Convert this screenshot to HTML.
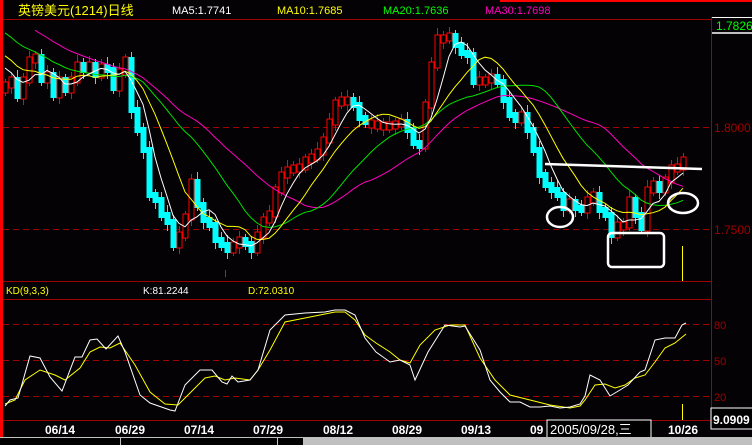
<!DOCTYPE html>
<html><head><meta charset="utf-8"><style>
html,body{margin:0;padding:0;background:#000;width:752px;height:445px;overflow:hidden}
svg{display:block}
text{font-family:"Liberation Sans","Noto Sans CJK SC",sans-serif}
</style></head><body>
<svg id="s" width="752" height="445" viewBox="0 0 752 445" xmlns="http://www.w3.org/2000/svg">
<rect width="752" height="445" fill="#040204"/>
<rect x="0" y="0" width="3" height="437" fill="#ff0000"/>
<rect x="500" y="0" width="252" height="2" fill="#ff0000"/>
<line x1="3" y1="19.5" x2="711" y2="19.5" stroke="#a00000"/>
<line x1="711.5" y1="17" x2="711.5" y2="420" stroke="#a00000"/>
<line x1="3" y1="281.5" x2="711" y2="281.5" stroke="#a00000"/>
<line x1="3" y1="299.5" x2="711" y2="299.5" stroke="#a00000"/>
<line x1="3" y1="420.5" x2="711" y2="420.5" stroke="#a00000"/>
<g stroke="#a00000" stroke-dasharray="6,4">
<line x1="3" y1="127.5" x2="711" y2="127.5"/>
<line x1="3" y1="229.5" x2="711" y2="229.5"/>
<line x1="3" y1="324.5" x2="711" y2="324.5"/>
<line x1="3" y1="360.5" x2="711" y2="360.5"/>
<line x1="3" y1="396.5" x2="711" y2="396.5"/>
</g>
<text x="18" y="15" fill="#ffff00" font-size="13">英镑美元(1214)日线</text>
<text x="172" y="14" fill="#ffffff" font-size="11">MA5:1.7741</text>
<text x="277" y="14" fill="#ffff00" font-size="11">MA10:1.7685</text>
<text x="383" y="14" fill="#00ff00" font-size="11">MA20:1.7636</text>
<text x="485" y="14" fill="#ff00c0" font-size="11">MA30:1.7698</text>
<line x1="712" y1="17.5" x2="752" y2="17.5" stroke="#fff"/>
<line x1="712" y1="33" x2="752" y2="33" stroke="#fff" stroke-width="1.5"/>
<text x="716" y="30" fill="#00ff00" font-size="12">1.7826</text>
<text x="714" y="132" fill="#a00000" font-size="12">1.8000</text>
<text x="714" y="234" fill="#a00000" font-size="12">1.7500</text>
<text x="6" y="294" fill="#ffff00" font-size="10">KD(9,3,3)</text>
<text x="143" y="294" fill="#ffffff" font-size="10">K:81.2244</text>
<text x="248" y="294" fill="#ffff00" font-size="10">D:72.0310</text>
<text x="714" y="329" fill="#a00000" font-size="11">80</text>
<text x="714" y="365" fill="#a00000" font-size="11">50</text>
<text x="714" y="401" fill="#a00000" font-size="11">20</text>
<rect x="711" y="408" width="42" height="21" fill="#000" stroke="#fff"/>
<text x="713" y="424" fill="#fff" font-size="12" font-weight="bold">9.0909</text>
<line x1="225.5" y1="270" x2="225.5" y2="277" stroke="#ff0000"/>
<line x1="682.5" y1="246" x2="682.5" y2="281" stroke="#ffff00"/>
<line x1="682.5" y1="404" x2="682.5" y2="420" stroke="#ffff00"/>
<g id="candles"></g>
<g id="lines" fill="none"></g>
<g fill="#fff" font-size="12" font-weight="bold">
<text x="45" y="434">06/14</text><text x="115" y="434">06/29</text><text x="184" y="434">07/14</text>
<text x="253" y="434">07/29</text><text x="323" y="434">08/12</text><text x="392" y="434">08/29</text>
<text x="461" y="434">09/13</text><text x="530" y="434">09</text><text x="668" y="434">10/26</text>
</g>
<rect x="547" y="420" width="104" height="18" fill="#000" stroke="#fff"/>
<text x="550" y="434" fill="#fff" font-size="13">2005/09/28,三</text>
<rect x="0" y="437" width="752" height="8" fill="#000"/>
<line x1="0" y1="437.5" x2="752" y2="437.5" stroke="#c0c0c0"/>
<rect x="303" y="438" width="449" height="7" fill="#c0c0c0"/>
<line x1="120.5" y1="438" x2="120.5" y2="445" stroke="#c0c0c0"/>
<line x1="277.5" y1="438" x2="277.5" y2="445" stroke="#c0c0c0"/>
<g stroke="#fff" stroke-width="2.5" fill="none">
<line x1="545" y1="164" x2="702" y2="169"/>
<ellipse cx="560" cy="217" rx="13" ry="10"/>
<ellipse cx="683" cy="203" rx="15" ry="10"/>
<rect x="608" y="233" width="56" height="34" rx="4"/>
</g>
</svg>
<script>
(function(){
var cl=[85,80,96,80,60,57,80,75,95,80,90,80,65,70,65,75,67,70,88,72,60,110,130,150,195,200,215,222,245,235,217,182,205,220,225,240,245,250,245,240,244,250,235,220,214,190,175,170,168,167,160,157,152,140,122,103,100,100,105,118,122,123,124,125,125,124,122,130,143,146,105,65,38,38,36,45,53,55,82,80,80,77,82,100,115,120,115,130,150,175,185,190,195,208,202,208,210,200,195,210,215,235,225,225,200,215,228,190,184,190,180,168,167,160];
var pre=[];for(var i=0;i<30;i++)pre.push(-60+i*4.5);
var all=pre.concat(cl);
var ns='http://www.w3.org/2000/svg';
function el(t,a,p){var e=document.createElementNS(ns,t);for(var k in a)e.setAttribute(k,a[k]);p.appendChild(e);return e;}
var cg=document.getElementById('candles');
for(var i=0;i<cl.length;i++){
 var x=5+i*6,c=cl[i],o=i?cl[i-1]:c+5;
 if(Math.abs(o-c)<2)o=c+2;
 var up=c<o,tp=Math.min(o,c)-3,bt=Math.max(o,c)+3;
 var w=((i*7)%5)+3;
 el('line',{x1:x+.5,y1:tp-w,x2:x+.5,y2:bt+((i*3)%6)+3,stroke:up?'#ff0000':'#00ffff'},cg);
 if(up)el('rect',{x:x-2,y:tp,width:5,height:bt-tp,fill:'#000',stroke:'#ff0000'},cg);
 else el('rect',{x:x-2.5,y:tp,width:6,height:bt-tp,fill:'#00ffff'},cg);
}
var lg=document.getElementById('lines');
function ma(n,col,start){var p=[];for(var i=0;i<cl.length;i++){var j=i+30,s=0;for(var k=0;k<n;k++)s+=all[j-k];var y=s/n;if(i>=start)p.push((5+i*6)+','+y.toFixed(1));}
 el('polyline',{points:p.join(' '),stroke:col,'stroke-width':1},lg);}
ma(30,'#ff00c0',5);ma(20,'#00e000',0);ma(10,'#ffff00',0);ma(5,'#ffffff',0);
var K=[[5,406],[10,400],[18,398],[30,356],[40,358],[50,377],[62,391],[75,357],[82,357],[90,340],[97,339],[106,349],[118,336],[125,352],[140,395],[150,403],[170,410],[175,411],[185,385],[200,370],[212,370],[222,382],[227,384],[232,376],[238,382],[250,380],[258,370],[270,330],[285,315],[305,313],[325,312],[335,310],[345,310],[355,315],[365,338],[376,352],[390,362],[400,360],[410,365],[415,380],[428,352],[445,325],[460,327],[465,326],[480,350],[490,380],[500,392],[510,402],[520,402],[530,407],[540,407],[550,406],[560,408],[570,407],[580,404],[585,396],[590,375],[600,380],[610,396],[620,390],[628,385],[640,372],[645,370],[655,340],[665,338],[675,338],[682,325],[686,323]];
var D=[[5,404],[15,400],[25,380],[40,370],[55,375],[65,380],[80,368],[90,352],[100,347],[110,348],[120,343],[135,365],[150,392],[165,404],[178,405],[190,393],[205,378],[215,376],[225,380],[235,378],[250,380],[258,370],[270,350],[285,322],[305,318],[320,315],[335,312],[345,312],[355,320],[365,335],[376,343],[390,352],[400,360],[410,363],[420,345],[435,330],[450,325],[465,325],[480,358],[495,380],[510,395],[530,400],[550,405],[570,408],[580,406],[585,400],[595,385],[605,384],[615,388],[625,385],[635,378],[645,375],[655,362],[665,348],[675,343],[686,334]];
el('polyline',{points:D.map(function(p){return p.join(',')}).join(' '),stroke:'#ffff00'},lg);
el('polyline',{points:K.map(function(p){return p.join(',')}).join(' '),stroke:'#ffffff'},lg);
})();
</script>
</body></html>
